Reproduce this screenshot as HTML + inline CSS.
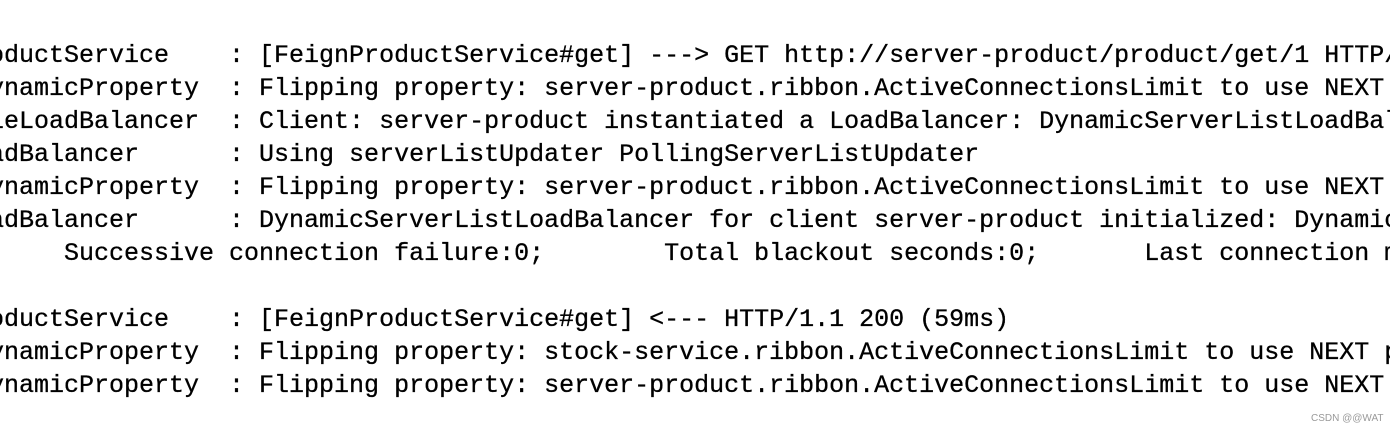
<!DOCTYPE html>
<html><head><meta charset="utf-8"><style>
html,body{margin:0;padding:0;background:#fff;width:1390px;height:433px;overflow:hidden;position:relative}
pre{position:absolute;left:-11px;top:39px;margin:0;font-family:"Liberation Mono",monospace;font-size:25px;line-height:33px;color:#000;white-space:pre;-webkit-text-stroke:0.3px #000}
.wm{position:absolute;left:1311px;top:413px;font-family:"Liberation Sans",sans-serif;font-size:10px;color:#999}
</style></head><body>
<pre>oductService    : [FeignProductService#get] ---&gt; GET http://server-product/product/get/1 HTTP/1.1
ynamicProperty  : Flipping property: server-product.ribbon.ActiveConnectionsLimit to use NEXT property
leLoadBalancer  : Client: server-product instantiated a LoadBalancer: DynamicServerListLoadBalancer
adBalancer      : Using serverListUpdater PollingServerListUpdater
ynamicProperty  : Flipping property: server-product.ribbon.ActiveConnectionsLimit to use NEXT property
adBalancer      : DynamicServerListLoadBalancer for client server-product initialized: DynamicServer
     Successive connection failure:0;        Total blackout seconds:0;       Last connection made

oductService    : [FeignProductService#get] &lt;--- HTTP/1.1 200 (59ms)
ynamicProperty  : Flipping property: stock-service.ribbon.ActiveConnectionsLimit to use NEXT property
ynamicProperty  : Flipping property: server-product.ribbon.ActiveConnectionsLimit to use NEXT property</pre>
<div class="wm">CSDN @@WAT</div>
</body></html>
